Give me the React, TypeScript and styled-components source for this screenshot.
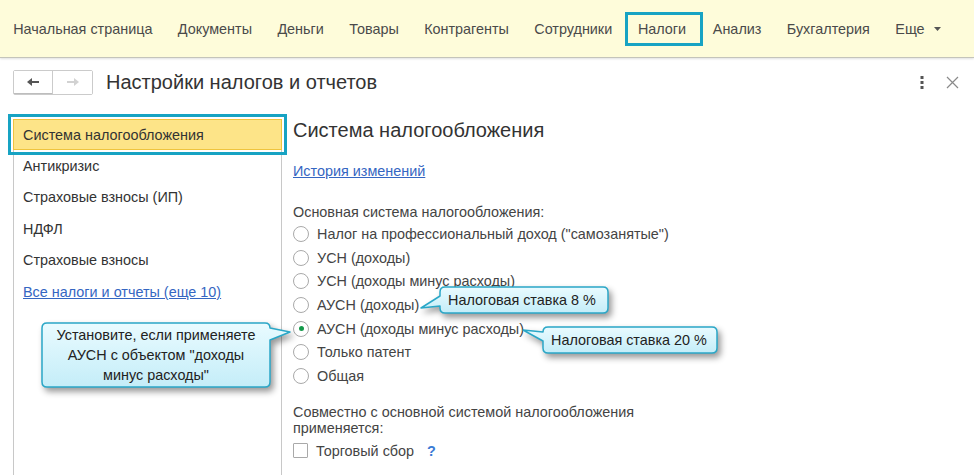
import React from "react";
import styled, { createGlobalStyle, css } from "styled-components";

const GlobalStyle = createGlobalStyle`
  html, body { margin: 0; padding: 0; background: #fff; }
  body {
    font-family: "Liberation Sans", Arial, sans-serif;
    font-size: 14.4px;
    color: #333;
  }
  * { box-sizing: border-box; }
`;

const Page = styled.div`
  position: relative;
  width: 974px;
  height: 475px;
  overflow: hidden;
  display: flex;
  flex-direction: column;
`;

/* ---------- top menu ---------- */

const TopBar = styled.nav`
  flex: none;
  height: 58px;
  display: flex;
  align-items: center;
  padding-left: 0.5px;
  background: #fefcda;
  border-bottom: 1px solid #c4c4ba;
  box-shadow: 0 1px 2px rgba(0, 0, 0, 0.12);
`;

const MenuItem = styled.div<{ $active?: boolean }>`
  display: flex;
  align-items: center;
  gap: 9px;
  height: 34px;
  padding: 0 12.7px;
  color: #4a4a4a;
  font-size: 14.4px;
  white-space: nowrap;

  ${(p) =>
    p.$active &&
    css`
      border: 3px solid #17a3c3;
      padding: 0 14px 0 10px;
      margin-right: -3px;
    `}
`;

/* ---------- header ---------- */

const Header = styled.header`
  flex: none;
  height: 48px;
  display: flex;
  align-items: center;
  padding: 0 13px;
`;

const NavGroup = styled.div`
  display: flex;
  height: 25px;
  border: 1px solid #cbcbcb;
  border-radius: 2px;
  margin-right: 13px;
`;

const NavButton = styled.div<{ $primary?: boolean }>`
  width: 39px;
  display: flex;
  align-items: center;
  justify-content: center;
  background: #fff;
  ${(p) =>
    p.$primary &&
    css`
      border-right: 1px solid #cbcbcb;
      box-shadow: inset 0 -1px 0 #bdbdbd;
    `}
`;

const Title = styled.h1`
  margin: 0;
  font-size: 20px;
  font-weight: normal;
  color: #333;
`;

const HeaderTools = styled.div`
  margin-left: auto;
  display: flex;
  align-items: center;
  gap: 22px;
  padding-right: 2px;
`;

/* ---------- body ---------- */

const Main = styled.div`
  flex: 1;
  display: flex;
  padding: 13px 0 0 13px;
`;

const Sidebar = styled.aside`
  flex: none;
  width: 269px;
  border-left: 1px solid #c8c8c8;
  border-right: 1px solid #c8c8c8;
`;

const SideItem = styled.div<{ $selected?: boolean; $link?: boolean }>`
  height: 31.4px;
  display: flex;
  align-items: center;
  padding-left: 9px;
  color: #333;
  white-space: nowrap;

  ${(p) =>
    p.$link &&
    css`
      color: #3566c2;
      text-decoration: underline;
    `}

  ${(p) =>
    p.$selected &&
    css`
      margin: 0 -1px;
      padding-left: 10px;
      background: #fde488;
      box-shadow: inset 0 0 0 1px #efc43e;
      outline: 3px solid #17a3c3;
      outline-offset: 2px;
    `}
`;

const Content = styled.section`
  flex: 1;
  padding-left: 11px;
  color: #444;
`;

const Heading = styled.h2`
  margin: 0;
  font-size: 20px;
  line-height: 22px;
  font-weight: normal;
  color: #333;
`;

const Link = styled.a`
  display: block;
  margin-top: 22px;
  line-height: 16px;
  color: #3566c2;
  text-decoration: underline;
`;

const Label = styled.div<{ $gap?: number }>`
  margin-top: ${(p) => p.$gap ?? 0}px;
  line-height: 16px;
`;

const RadioList = styled.div`
  margin-top: 2px;
`;

const OptionRow = styled.div<{ $height?: number; $gap?: number }>`
  height: ${(p) => p.$height ?? 23.7}px;
  margin-top: ${(p) => p.$gap ?? 0}px;
  display: flex;
  align-items: center;
  gap: 8px;
  white-space: nowrap;
`;

const RadioCircle = styled.span<{ $checked?: boolean }>`
  width: 16px;
  height: 16px;
  flex: none;
  border-radius: 50%;
  border: 1px solid #a9a9a9;
  background: #fff;
  display: flex;
  align-items: center;
  justify-content: center;

  &::after {
    content: "";
    width: 5px;
    height: 5px;
    border-radius: 50%;
    background: ${(p) => (p.$checked ? "#14994a" : "transparent")};
  }
`;

const CheckBox = styled.span`
  width: 15px;
  height: 15px;
  flex: none;
  border: 1px solid #a9a9a9;
  border-radius: 1px;
  background: #fff;
`;

const Help = styled.span`
  margin-left: 5px;
  color: #3a7bd5;
  font-weight: bold;
`;

/* ---------- callouts ---------- */

const CalloutBox = styled.div<{ $x: number; $y: number; $w: number; $h: number }>`
  position: absolute;
  left: ${(p) => p.$x}px;
  top: ${(p) => p.$y}px;
  width: ${(p) => p.$w}px;
  height: ${(p) => p.$h}px;
`;

const CalloutShape = styled.svg`
  position: absolute;
  left: 0;
  top: 0;
  overflow: visible;
  filter: drop-shadow(3px 4px 3px rgba(0, 0, 0, 0.4));
`;

const CalloutText = styled.div<{ $center?: boolean }>`
  position: relative;
  height: 100%;
  display: flex;
  flex-direction: column;
  justify-content: center;
  align-items: ${(p) => (p.$center ? "center" : "flex-start")};
  padding: 0 8px;
  line-height: 20px;
  color: #222;
  text-align: center;
  white-space: nowrap;
`;

type Tail = { side: "left" | "right"; y1: number; y2: number; tx: number; ty: number };

function bubblePath(w: number, h: number, r: number, t: Tail) {
  if (t.side === "left") {
    return `M ${r},0 H ${w - r} Q ${w},0 ${w},${r} V ${h - r} Q ${w},${h} ${w - r},${h} H ${r} Q 0,${h} 0,${h - r} V ${t.y2} L ${t.tx},${t.ty} L 0,${t.y1} V ${r} Q 0,0 ${r},0 Z`;
  }
  return `M ${r},0 H ${w - r} Q ${w},0 ${w},${r} V ${t.y1} L ${t.tx},${t.ty} L ${w},${t.y2} V ${h - r} Q ${w},${h} ${w - r},${h} H ${r} Q 0,${h} 0,${h - r} V ${r} Q 0,0 ${r},0 Z`;
}

function Callout(props: {
  id: string;
  x: number;
  y: number;
  w: number;
  h: number;
  tail: Tail;
  center?: boolean;
  children: React.ReactNode;
}) {
  const { id, x, y, w, h, tail } = props;
  return (
    <CalloutBox $x={x} $y={y} $w={w} $h={h}>
      <CalloutShape width={w} height={h}>
        <defs>
          <linearGradient id={id} x1="0" y1="0" x2="0" y2="1">
            <stop offset="0" stopColor="#e9fbff" />
            <stop offset="1" stopColor="#c4edf8" />
          </linearGradient>
        </defs>
        <path
          d={bubblePath(w, h, 5, tail)}
          fill={`url(#${id})`}
          stroke="#2aa7c7"
          strokeWidth="1.5"
          strokeLinejoin="round"
        />
      </CalloutShape>
      <CalloutText $center={props.center}>{props.children}</CalloutText>
    </CalloutBox>
  );
}

/* ---------- icons ---------- */

const ArrowLeft = ({ color }: { color: string }) => (
  <svg width="14" height="10" viewBox="0 0 14 10">
    <path d="M1 5 L6 1 V4 H13 V6 H6 V9 Z" fill={color} />
  </svg>
);

const ArrowRight = ({ color }: { color: string }) => (
  <svg width="14" height="10" viewBox="0 0 14 10">
    <path d="M13 5 L8 1 V4 H1 V6 H8 V9 Z" fill={color} />
  </svg>
);

const MoreIcon = () => (
  <svg width="4" height="13" viewBox="0 0 4 13">
    <rect x="0.5" y="0" width="3" height="3" fill="#555" />
    <rect x="0.5" y="5" width="3" height="3" fill="#555" />
    <rect x="0.5" y="10" width="3" height="3" fill="#555" />
  </svg>
);

const CloseIcon = () => (
  <svg width="13" height="13" viewBox="0 0 13 13">
    <path d="M1 1 L12 12 M12 1 L1 12" stroke="#8a8a8a" strokeWidth="1.2" />
  </svg>
);

const Caret = () => (
  <svg width="7" height="4" viewBox="0 0 7 4">
    <path d="M0 0 H7 L3.5 4 Z" fill="#555" />
  </svg>
);

/* ---------- data ---------- */

const menu = [
  "Начальная страница",
  "Документы",
  "Деньги",
  "Товары",
  "Контрагенты",
  "Сотрудники",
  "Налоги",
  "Анализ",
  "Бухгалтерия",
];

const sideItems = ["Антикризис", "Страховые взносы (ИП)", "НДФЛ", "Страховые взносы"];

const taxSystems = [
  'Налог на профессиональный доход ("самозанятые")',
  "УСН (доходы)",
  "УСН (доходы минус расходы)",
  "АУСН (доходы)",
  "АУСН (доходы минус расходы)",
  "Только патент",
  "Общая",
];

export default function App() {
  return (
    <>
      <GlobalStyle />
      <Page>
        <TopBar>
          {menu.map((m) => (
            <MenuItem key={m} $active={m === "Налоги"}>
              {m}
            </MenuItem>
          ))}
          <MenuItem>
            Еще <Caret />
          </MenuItem>
        </TopBar>

        <Header>
          <NavGroup>
            <NavButton $primary>
              <ArrowLeft color="#555" />
            </NavButton>
            <NavButton>
              <ArrowRight color="#d2d2d2" />
            </NavButton>
          </NavGroup>
          <Title>Настройки налогов и отчетов</Title>
          <HeaderTools>
            <MoreIcon />
            <CloseIcon />
          </HeaderTools>
        </Header>

        <Main>
          <Sidebar>
            <SideItem $selected>Система налогообложения</SideItem>
            {sideItems.map((s) => (
              <SideItem key={s}>{s}</SideItem>
            ))}
            <SideItem $link>Все налоги и отчеты (еще 10)</SideItem>
          </Sidebar>

          <Content>
            <Heading>Система налогообложения</Heading>
            <Link>История изменений</Link>
            <Label $gap={25}>Основная система налогообложения:</Label>
            <RadioList>
              {taxSystems.map((t) => (
                <OptionRow key={t}>
                  <RadioCircle $checked={t === "АУСН (доходы минус расходы)"} />
                  {t}
                </OptionRow>
              ))}
            </RadioList>
            <Label $gap={16}>
              Совместно с основной системой налогообложения
              <br />
              применяется:
            </Label>
            <OptionRow $height={22} $gap={4}>
              <CheckBox />
              Торговый сбор
              <Help>?</Help>
            </OptionRow>
          </Content>
        </Main>

        <Callout id="g1" x={440} y={287} w={168} h={26} tail={{ side: "left", y1: 9, y2: 19, tx: -19, ty: 21 }}>
          Налоговая ставка 8 %
        </Callout>
        <Callout id="g2" x={543} y={327} w={174} h={26} tail={{ side: "left", y1: 5, y2: 14, tx: -20, ty: 3 }}>
          Налоговая ставка 20 %
        </Callout>
        <Callout
          id="g3"
          x={42}
          y={323}
          w={228}
          h={64}
          center
          tail={{ side: "right", y1: 5, y2: 17, tx: 248, ty: 9 }}
        >
          <span>Установите, если применяете</span>
          <span>АУСН с объектом "доходы</span>
          <span>минус расходы"</span>
        </Callout>
      </Page>
    </>
  );
}
